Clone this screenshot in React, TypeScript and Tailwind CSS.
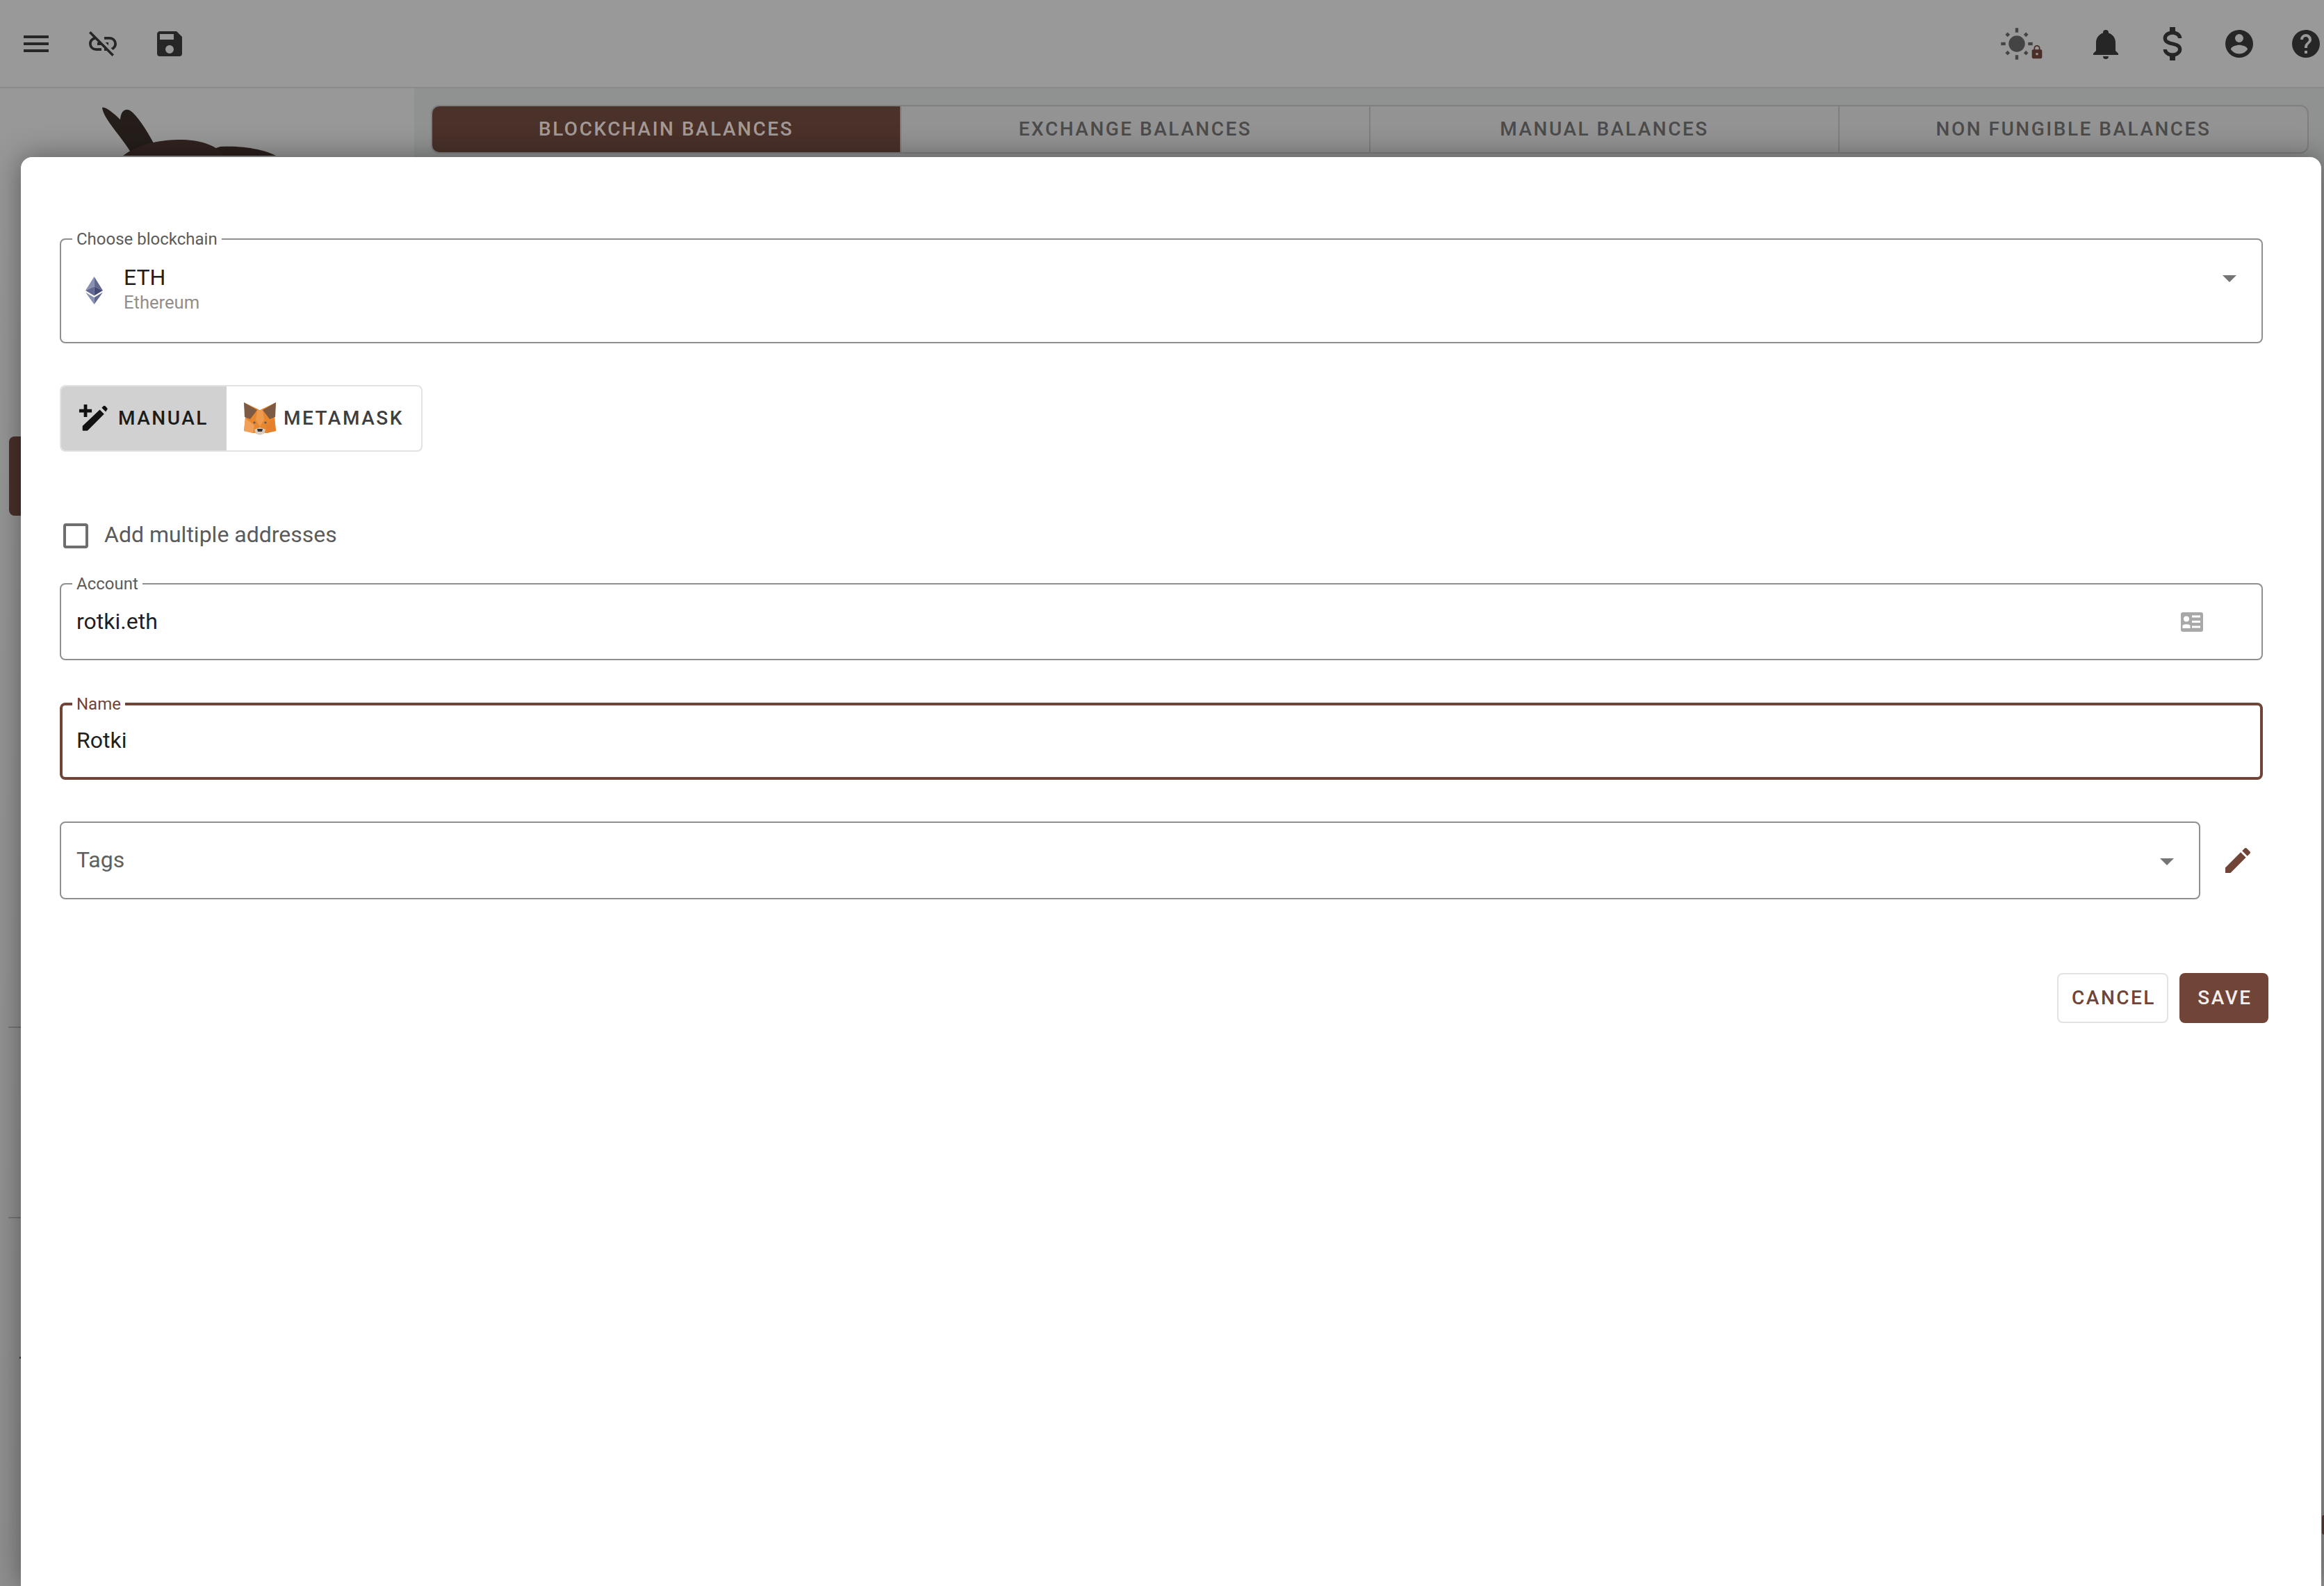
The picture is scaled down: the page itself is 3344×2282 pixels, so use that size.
import type { ReactNode } from 'react';

const font = { fontFamily: 'Roboto, sans-serif' };

function MdiIcon({ d, className }: { d: string; className: string }) {
  return (
    <svg viewBox="0 0 24 24" className={className} fill="currentColor">
      <path d={d} />
    </svg>
  );
}

const paths = {
  menu: 'M3,6H21V8H3V6M3,11H21V13H3V11M3,16H21V18H3V16Z',
  linkOff:
    'M17,7H13V8.9H17C18.71,8.9 20.1,10.29 20.1,12C20.1,13.43 19.12,14.63 17.79,15L19.25,16.44C20.88,15.61 22,13.95 22,12A5,5 0 0,0 17,7M16,11H13.81L15.81,13H16V11M2,4.27L5.11,7.38C3.29,8.12 2,9.91 2,12A5,5 0 0,0 7,17H11V15.1H7C5.29,15.1 3.9,13.71 3.9,12C3.9,10.41 5.11,9.1 6.66,8.93L8.73,11H8V13H10.73L13,15.27V17H14.73L18.74,21L20,19.74L3.27,3L2,4.27Z',
  save: 'M15,9H5V5H15M12,19A3,3 0 0,1 9,16A3,3 0 0,1 12,13A3,3 0 0,1 15,16A3,3 0 0,1 12,19M17,3H5C3.89,3 3,3.9 3,5V19A2,2 0 0,0 5,21H19A2,2 0 0,0 21,19V7L17,3Z',
  bell: 'M21,19V20H3V19L5,17V11C5,7.9 7.03,5.17 10,4.29C10,4.19 10,4.1 10,4A2,2 0 0,1 12,2A2,2 0 0,1 14,4C14,4.1 14,4.19 14,4.29C16.97,5.17 19,7.9 19,11V17L21,19M14,21A2,2 0 0,1 12,23A2,2 0 0,1 10,21',
  usd: 'M7,15H9C9,16.08 10.37,17 12,17C13.63,17 15,16.08 15,15C15,13.9 13.96,13.5 11.76,12.97C9.64,12.44 7,11.78 7,9C7,7.21 8.47,5.69 10.5,5.18V3H13.5V5.18C15.53,5.69 17,7.21 17,9H15C15,7.92 13.63,7 12,7C10.37,7 9,7.92 9,9C9,10.1 10.04,10.5 12.24,11.03C14.36,11.56 17,12.22 17,15C17,16.79 15.53,18.31 13.5,18.82V21H10.5V18.82C8.47,18.31 7,16.79 7,15Z',
  account:
    'M12,19.2C9.5,19.2 7.29,17.92 6,16C6.03,14 10,12.9 12,12.9C14,12.9 17.97,14 18,16C16.71,17.92 14.5,19.2 12,19.2M12,5A3,3 0 0,1 15,8A3,3 0 0,1 12,11A3,3 0 0,1 9,8A3,3 0 0,1 12,5M12,2A10,10 0 0,0 2,12A10,10 0 0,0 12,22A10,10 0 0,0 22,12C22,6.47 17.5,2 12,2Z',
  help: 'M15.07,11.25L14.17,12.17C13.45,12.89 13,13.5 13,15H11V14.5C11,13.39 11.45,12.39 12.17,11.67L13.41,10.41C13.78,10.05 14,9.55 14,9C14,7.89 13.1,7 12,7A2,2 0 0,0 10,9H8A4,4 0 0,1 12,5A4,4 0 0,1 16,9C16,9.88 15.64,10.67 15.07,11.25M13,19H11V17H13M12,2A10,10 0 0,0 2,12A10,10 0 0,0 12,22A10,10 0 0,0 22,12C22,6.47 17.5,2 12,2Z',
  pencil:
    'M20.71,7.04C21.1,6.65 21.1,6 20.71,5.63L18.37,3.29C18,2.9 17.35,2.9 16.96,3.29L15.12,5.12L18.87,8.87M3,17.25V21H6.75L17.81,9.93L14.06,6.18L3,17.25Z',
  lock: 'M12,17A2,2 0 0,0 14,15C14,13.89 13.1,13 12,13A2,2 0 0,0 10,15A2,2 0 0,0 12,17M18,8A2,2 0 0,1 20,10V20A2,2 0 0,1 18,22H6A2,2 0 0,1 4,20V10C4,8.89 4.9,8 6,8H7V6A5,5 0 0,1 12,1A5,5 0 0,1 17,6V8H18M12,3A3,3 0 0,0 9,6V8H15V6A3,3 0 0,0 12,3Z',
};

function SunLock() {
  return (
    <div className="relative w-[60px] h-[52px] mr-[22px]">
      <svg viewBox="0 0 24 24" className="w-[52px] h-[52px] text-[#444444]" fill="currentColor">
        <circle cx="12" cy="12" r="5.4" />
        <rect x="11" y="1.5" width="2" height="3" />
        <rect x="11" y="19.5" width="2" height="3" />
        <rect x="1.5" y="11" width="3" height="2" />
        <rect x="19.5" y="11" width="3" height="2" />
        <rect x="4.8" y="4.8" width="2.2" height="2.2" transform="rotate(45 5.9 5.9)" />
        <rect x="17" y="4.8" width="2.2" height="2.2" transform="rotate(45 18.1 5.9)" />
        <rect x="4.8" y="17" width="2.2" height="2.2" transform="rotate(45 5.9 18.1)" />
        <rect x="17" y="17" width="2.2" height="2.2" transform="rotate(45 18.1 18.1)" />
      </svg>
      <MdiIcon d={paths.lock} className="absolute left-[44px] top-[26px] w-[22px] h-[24px] text-[#4a2d26]" />
    </div>
  );
}

function BirdLogo() {
  return (
    <svg viewBox="0 0 250 70" className="w-[250px] h-[70px]">
      <path d="M0 1 C3 -2 16 8 26 18 C27 3 36 0 44 8 C56 20 68 40 76 56 L44 70 C30 44 2 18 0 1Z" fill="#241d1a" />
      <path d="M170 57 C205 55 235 62 250 70 L130 70Z" fill="#2a1e1b" />
      <path d="M30 70 C50 54 85 46 116 47 C145 48 165 56 176 70Z" fill="#30221f" />
    </svg>
  );
}

function Sidebar() {
  return (
    <aside className="w-[596px] h-full shrink-0 bg-gradient-to-b from-[#989898] to-[#8f8f8f] flex flex-col">
      <div className="pl-[147px] pt-[27px] h-[501px]">
        <BirdLogo />
      </div>
      <div className="w-[200px] h-[114px] ml-[13px] rounded-[8px] bg-[#4a312a]" />
      <div className="w-[300px] h-[2px] ml-[12px] mt-[735px] bg-[#767676]" />
      <div className="w-[300px] h-[2px] ml-[12px] mt-[272px] bg-[#767676]" />
      <div className="w-[6px] h-[3px] ml-[28px] mt-[199px] bg-[#444444]" />
    </aside>
  );
}

const tabs = ['BLOCKCHAIN BALANCES', 'EXCHANGE BALANCES', 'MANUAL BALANCES', 'NON FUNGIBLE BALANCES'];

function Background() {
  return (
    <div className="h-full flex flex-col">
      <header className="h-[127px] shrink-0 bg-[#999999] border-b-2 border-[#8a8a8a] flex items-center text-[#262626]">
        <div className="flex items-center pl-[28px] gap-[48px]">
          <MdiIcon d={paths.menu} className="w-[48px] h-[48px]" />
          <MdiIcon d={paths.linkOff} className="w-[48px] h-[48px]" />
          <MdiIcon d={paths.save} className="w-[48px] h-[48px]" />
        </div>
        <div className="ml-auto flex items-center gap-[48px] mr-[2px]">
          <SunLock />
          <MdiIcon d={paths.bell} className="w-[48px] h-[48px]" />
          <MdiIcon d={paths.usd} className="w-[64px] h-[64px] mx-[-8px]" />
          <MdiIcon d={paths.account} className="w-[48px] h-[48px]" />
          <MdiIcon d={paths.help} className="w-[48px] h-[48px]" />
        </div>
      </header>
      <div className="flex-1 flex min-h-0">
        <Sidebar />
        <main className="flex-1 bg-[#909291] pl-[24px] pr-[22px] pt-[24px]">
          <div className="flex h-[70px] rounded-[12px] border-2 border-[#7f7f7f] bg-[#939393] overflow-hidden">
            {tabs.map((tab, i) => (
              <div
                key={tab}
                className={
                  i === 0
                    ? 'flex-1 flex items-center justify-center bg-[#4a312a] text-[#a39a96] text-[28px] font-medium tracking-[2.5px]'
                    : 'flex-1 flex items-center justify-center border-l-2 border-[#7f7f7f] text-[#4b4b4b] text-[28px] font-medium tracking-[2.5px]'
                }
              >
                {tab}
              </div>
            ))}
          </div>
        </main>
      </div>
    </div>
  );
}

function EthLogo() {
  return (
    <svg viewBox="0 0 30 48" className="w-[25px] h-[42px]">
      <polygon points="15,0 0,24 15,17" fill="#8a92b2" />
      <polygon points="15,0 30,24 15,17" fill="#62688f" />
      <polygon points="15,17 0,24 15,33" fill="#62688f" />
      <polygon points="15,17 30,24 15,33" fill="#454a75" />
      <polygon points="0,27 15,48 15,36" fill="#8a92b2" />
      <polygon points="30,27 15,48 15,36" fill="#62688f" />
    </svg>
  );
}

function FoxLogo() {
  return (
    <svg viewBox="0 0 48 48" className="w-[48px] h-[48px]">
      <polygon points="1,1 24,12 47,1 45,22 47,42 34,45 14,45 1,42 3,22" fill="#e8872e" />
      <polygon points="1,1 20,12 10,25 2,22" fill="#7d5a44" />
      <polygon points="47,1 28,12 38,25 46,22" fill="#7d5a44" />
      <polygon points="20,12 28,12 30,26 24,36 18,26" fill="#ee9b4f" />
      <polygon points="1,42 3,24 16,34 14,45" fill="#f0a05a" />
      <polygon points="47,42 45,24 32,34 34,45" fill="#e5812c" />
      <polygon points="16,40 24,37 32,40 30,46 24,48 18,46" fill="#d8cbbf" />
      <polygon points="20,39 28,39 27,43 21,43" fill="#33302e" />
      <circle cx="16" cy="30" r="1.6" fill="#5c5a60" />
      <circle cx="32" cy="30" r="1.6" fill="#5c5a60" />
    </svg>
  );
}

function WandIcon() {
  return (
    <svg viewBox="0 0 44 44" className="w-[42px] h-[42px]" fill="#111111">
      <path d="M8 1h5v7h7v5h-7v7H8v-7H1V8h7z" />
      <path d="M32 9 L38.5 15.5 L14 40 a1.5 1.5 0 0 1 -1 .5 H7 a1 1 0 0 1 -1 -1 V34 a1.5 1.5 0 0 1 .5 -1z" />
      <path d="M35 6 L37.5 3.5 a2 2 0 0 1 2.8 0 L43 6.2 a2 2 0 0 1 0 2.8 L41 12z" />
    </svg>
  );
}

function CardIcon() {
  return (
    <svg viewBox="0 0 32 28" className="w-[32px] h-[28px]">
      <rect width="32" height="28" rx="3" fill="#a8a8a8" />
      <circle cx="8" cy="9.5" r="4" fill="#ffffff" />
      <path d="M2.5 23 V19.5 C2.5 16.5 13.5 16.5 13.5 19.5 V23Z" fill="#ffffff" />
      <rect x="16" y="4.5" width="12" height="3" fill="#ffffff" />
      <rect x="16" y="12" width="12" height="3" fill="#ffffff" />
      <rect x="16" y="19.5" width="12" height="3" fill="#ffffff" />
    </svg>
  );
}

function Field({
  label,
  focused,
  className,
  children,
}: {
  label: string;
  focused?: boolean;
  className: string;
  children: ReactNode;
}) {
  return (
    <div
      className={`relative rounded-[8px] ${
        focused ? 'border-4 border-[#704436]' : 'border-2 border-[#8f8f8f]'
      } ${className}`}
    >
      {label && (
        <span
          className={`absolute bg-white px-[6px] text-[24px] leading-[24px] ${
            focused ? 'top-[-14px] left-[14px] text-[#704436]' : 'top-[-13px] left-[16px] text-[#5b5b5b]'
          }`}
        >
          {label}
        </span>
      )}
      {children}
    </div>
  );
}

function Caret() {
  return <div className="w-0 h-0 border-x-[10px] border-x-transparent border-t-[10px] border-t-[#757575]" />;
}

function Dialog() {
  return (
    <div className="absolute left-[30px] right-[4px] top-[226px] bottom-0 bg-white rounded-t-[16px] shadow-[0_0_40px_rgba(0,0,0,0.4)] pt-[117px] pl-[56px] pr-[84px]">
      <Field label="Choose blockchain" className="h-[151px] flex items-start">
        <div className="ml-[35px] mt-[52px]">
          <EthLogo />
        </div>
        <div className="ml-[30px] mt-[35px] flex flex-col">
          <span className="text-[32px] leading-[38px] text-[#1f1f1f]">ETH</span>
          <span className="text-[25.6px] leading-[34px] text-[#8f8f8f]">Ethereum</span>
        </div>
        <div className="ml-auto mr-[36px] mt-[51px]">
          <Caret />
        </div>
      </Field>

      <div className="mt-[60px] flex w-[522px] h-[96px] rounded-[8px] border-2 border-[#e2e2e2] overflow-hidden">
        <div className="w-[238px] bg-[#d1d1d1] flex items-center pl-[25px] gap-[15px] text-[28px] font-medium tracking-[2.5px] text-[#1c1c1c]">
          <WandIcon />
          MANUAL
        </div>
        <div className="flex-1 flex items-center pl-[24px] gap-[10px] text-[28px] font-medium tracking-[2.5px] text-[#3f3f3f]">
          <FoxLogo />
          METAMASK
        </div>
      </div>

      <label className="mt-[103px] ml-[5px] flex items-center h-[36px] gap-[23px] text-[32px] text-[#5b5b5b]">
        <span className="w-[36px] h-[36px] rounded-[4px] border-4 border-[#6e6e6e]" />
        <span className="mb-[4px]">Add multiple addresses</span>
      </label>

      <Field label="Account" className="mt-[50px] h-[111px] flex items-center">
        <span className="ml-[22px] text-[32px] text-[#1f1f1f] mb-[2px]">rotki.eth</span>
        <div className="ml-auto mr-[84px] flex">
          <CardIcon />
        </div>
      </Field>

      <Field label="Name" focused className="mt-[61px] h-[111px] flex items-center">
        <span className="ml-[20px] text-[32px] text-[#1f1f1f] mb-[4px]">Rotki</span>
      </Field>

      <div className="mt-[60px] flex items-center">
        <Field label="" className="w-[3080px] h-[112px] flex items-center">
          <span className="ml-[22px] text-[32px] text-[#5f5f5f] mb-[2px]">Tags</span>
          <div className="ml-auto mr-[36px] mt-[4px]">
            <Caret />
          </div>
        </Field>
        <MdiIcon d={paths.pencil} className="ml-[30px] w-[48px] h-[48px] text-[#704436]" />
      </div>

      <div className="mt-[106px] mr-[-8px] flex justify-end gap-[16px]">
        <div className="w-[160px] h-[72px] pl-[3px] rounded-[8px] border-2 border-[#e2e2e2] flex items-center justify-center text-[28px] font-medium tracking-[2.5px] text-[#704436]">
          CANCEL
        </div>
        <div className="w-[128px] h-[72px] pl-[3px] rounded-[8px] bg-[#704436] flex items-center justify-center text-[28px] font-medium tracking-[2.5px] text-[#f3eeec]">
          SAVE
        </div>
      </div>
    </div>
  );
}

export default function App() {
  return (
    <div className="relative w-[3344px] h-[2282px] overflow-hidden bg-[#8f8f8f]" style={font}>
      <Background />
      <Dialog />
      <div className="absolute right-0 top-[2180px] w-[3px] h-[28px] rounded-l-full bg-[#4a312a]" />
    </div>
  );
}
